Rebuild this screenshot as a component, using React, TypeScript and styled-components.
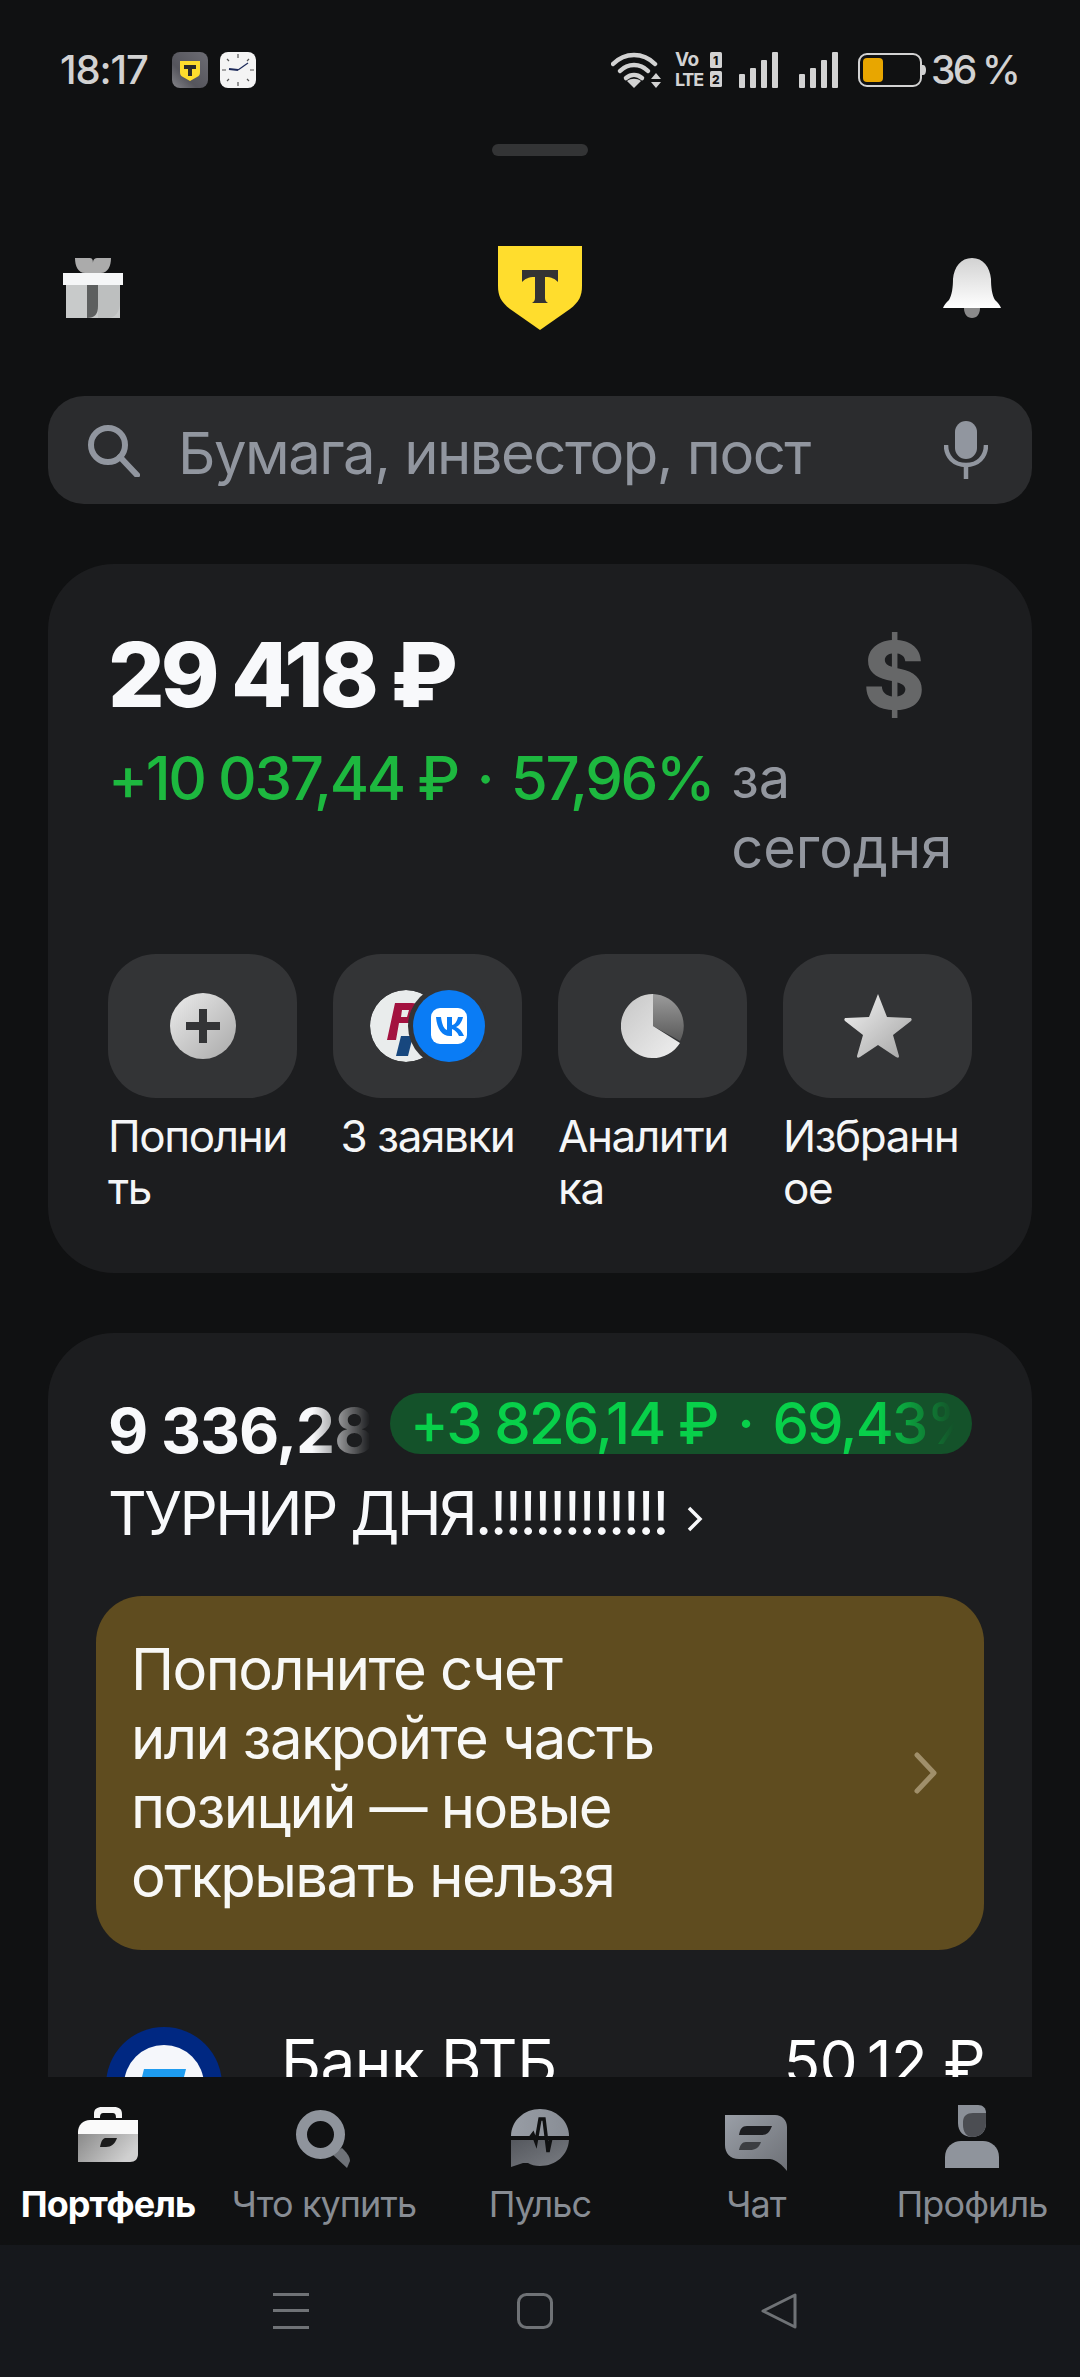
import React from 'react';
import styled, { createGlobalStyle } from 'styled-components';

const GlobalStyle = createGlobalStyle`
  html, body {
    margin: 0;
    padding: 0;
    background: #101112;
  }
  * {
    box-sizing: border-box;
  }
`;

const font = `Inter, "Noto Sans", "Liberation Sans", sans-serif`;

const Screen = styled.div`
  width: 1080px;
  height: 2377px;
  display: flex;
  flex-direction: column;
  overflow: hidden;
  background: #101112;
  font-family: ${font};
  color: #fff;
`;

const Scroll = styled.main`
  flex: 1;
  min-height: 0;
  overflow: hidden;
`;

/* status bar */
const StatusBar = styled.div`
  height: 136px;
  padding: 51px 62px 0 60px;
  display: flex;
  justify-content: space-between;
  align-items: flex-start;
  color: #d2d2d2;
`;

const StatusGroup = styled.div`
  display: flex;
  align-items: center;
  height: 37px;
`;

const Time = styled.span`
  font-size: 40px;
  font-weight: 500;
  letter-spacing: -1.1px;
  margin-right: 24px;
`;

const Percent = styled.span`
  font-size: 39px;
  font-weight: 500;
  margin-left: 5px;
  letter-spacing: -2.8px;
`;

const Handle = styled.div`
  width: 96px;
  height: 12px;
  margin: 8px auto 0;
  border-radius: 6px;
  background: #333435;
`;

const Header = styled.header`
  margin-top: 90px;
  height: 84px;
  padding: 12px 78px 0 63px;
  display: flex;
  justify-content: space-between;
  align-items: flex-start;
  position: relative;
`;

const LogoSlot = styled.div`
  position: absolute;
  left: 497px;
  top: 0;
`;

/* search */
const Search = styled.div`
  margin: 66px 48px 0;
  height: 108px;
  border-radius: 36px;
  background: #2b2c2e;
  display: flex;
  align-items: center;
  padding: 0 44px 0 38px;
`;

const SearchText = styled.span`
  flex: 1;
  margin-left: 38px;
  padding-top: 6px;
  font-size: 58px;
  letter-spacing: -1.5px;
  color: #91969f;
`;

/* cards */
const Card = styled.section<{ $top: number }>`
  margin: ${({ $top }) => $top}px 48px 0;
  padding: 60px 60px 0;
  border-radius: 66px;
  background: #1c1d1f;
`;

const BalanceRow = styled.div`
  display: flex;
  justify-content: space-between;
  align-items: flex-start;
`;

const Balance = styled.div`
  font-size: 89px;
  font-weight: 800;
  line-height: 102px;
  letter-spacing: -4px;
  color: #f8f9fb;
`;

const Currency = styled.div`
  font-size: 94px;
  font-weight: 800;
  line-height: 102px;
  color: #666768;
  margin-right: 47px;
`;

const ChangeRow = styled.div`
  display: flex;
  margin-top: 17px;
  align-items: flex-start;
`;

const Change = styled.div`
  font-size: 60px;
  line-height: 70px;
  font-weight: 500;
  letter-spacing: -2.4px;
  color: #1db83f;
  white-space: nowrap;
  margin-right: 18px;
`;

const Dot = styled.span<{ $gap: number }>`
  margin: 0 ${({ $gap }) => $gap}px;
`;

const ChangeNote = styled.div`
  font-size: 56px;
  line-height: 70px;
  color: #93979f;
`;

const Actions = styled.div`
  display: grid;
  grid-template-columns: repeat(4, 189px);
  column-gap: 36px;
  margin-top: 71px;
  padding-bottom: 59px;
`;

const Action = styled.div`
  display: flex;
  flex-direction: column;
  align-items: center;
`;

const ActionTile = styled.div`
  width: 189px;
  height: 144px;
  border-radius: 48px;
  background: #333436;
  display: flex;
  align-items: center;
  justify-content: center;
`;

const ActionLabel = styled.div`
  margin-top: 12px;
  font-size: 44px;
  line-height: 52px;
  letter-spacing: -1.4px;
  overflow-wrap: anywhere;
  color: #f5f6f7;
  width: 100%;
`;

const ActionLabelShort = styled(ActionLabel)`
  width: auto;
  white-space: nowrap;
`;

const TopLine = styled.div`
  display: flex;
  align-items: center;
  height: 62px;
  margin-top: -1px;
`;

const Amount = styled.div`
  width: 262px;
  margin-top: 14px;
  font-size: 62px;
  font-weight: 700;
  letter-spacing: -1px;
  white-space: nowrap;
  overflow: hidden;
  color: #f8f9fb;
  mask-image: linear-gradient(90deg, #000 78%, transparent 100%);
`;

const GainPill = styled.div`
  margin-left: 20px;
  width: 582px;
  height: 61px;
  border-radius: 31px;
  background: #14522a;
  padding-left: 20px;
  display: flex;
  align-items: center;
  overflow: hidden;
`;

const GainText = styled.div`
  width: 544px;
  overflow: hidden;
  white-space: nowrap;
  font-size: 58px;
  font-weight: 500;
  letter-spacing: -1.9px;
  color: #08d04a;
  mask-image: linear-gradient(90deg, #000 86%, transparent 100%);
`;

const PortfolioName = styled.div`
  margin-top: 23px;
  height: 72px;
  display: flex;
  align-items: center;
  font-size: 60px;
  letter-spacing: -2.5px;
  color: #f8f9fb;
`;

const NameChevron = styled.span`
  display: flex;
  margin-left: 20px;
  margin-top: 12px;
`;

const Notice = styled.div`
  margin: 47px -12px 0;
  min-height: 354px;
  padding: 0 46px 0 35px;
  border-radius: 46px;
  background: #5f4c1f;
  display: flex;
  align-items: center;
  justify-content: space-between;
`;

const NoticeText = styled.div`
  font-size: 58px;
  line-height: 69px;
  letter-spacing: -1.6px;
  color: #f8f8f6;
`;

const Position = styled.div`
  margin: 77px -13px 0 -2px;
  display: flex;
  align-items: flex-start;
`;

const PositionLogo = styled.div`
  width: 116px;
  height: 116px;
  flex-shrink: 0;
`;

const PositionName = styled.div`
  flex: 1;
  margin-left: 59px;
  font-size: 62px;
  line-height: 70px;
  letter-spacing: -0.5px;
`;

const PositionPrice = styled.div`
  font-size: 60px;
  line-height: 70px;
  letter-spacing: -0.5px;
`;

/* tab bar */
const TabBar = styled.nav`
  height: 168px;
  flex-shrink: 0;
  background: #101112;
  display: grid;
  grid-template-columns: repeat(5, 216px);
`;

const Tab = styled.div<{ $active?: boolean }>`
  display: flex;
  flex-direction: column;
  align-items: center;
  justify-content: flex-end;
  padding-bottom: 19px;
  font-size: 36px;
  line-height: 44px;
  letter-spacing: -0.9px;
  white-space: nowrap;
  font-weight: ${({ $active }) => ($active ? 700 : 400)};
  color: ${({ $active }) => ($active ? '#fff' : '#878c93')};
`;

const TabIcon = styled.div<{ $lift: number }>`
  height: 70px;
  margin-bottom: 11px;
  padding-bottom: ${({ $lift }) => $lift}px;
  display: flex;
  align-items: flex-end;
`;

const SystemNav = styled.div`
  height: 132px;
  flex-shrink: 0;
  background: #16181c;
  display: flex;
  justify-content: center;
  align-items: flex-start;
  gap: 208px;
  padding: 48px 10px 0 0;
`;

/* icons */
const WifiIcon = () => (
  <svg width="51" height="37" viewBox="0 0 51 37" fill="none" stroke="#d2d2d2" strokeWidth="4.5" strokeLinecap="round">
    <path d="M2 13C14 1 32 1 44 13" />
    <path d="M9 20C17 12 29 12 37 20" />
    <path d="M15 27C20 23 26 23 31 27" />
    <path d="M23 37l-7-7c4-3 10-3 14 0z" fill="#d2d2d2" stroke="none" />
    <path d="M45 22l5 6H40zM45 37l-5-6h10z" fill="#d2d2d2" stroke="none" />
  </svg>
);

const VolteIcon = () => (
  <svg width="48" height="37" viewBox="0 0 48 37" fill="#d2d2d2" style={{ marginLeft: 13 }}>
    <text x="0" y="15" fontFamily="Inter" fontWeight="700" fontSize="19" letterSpacing="-0.5">Vo</text>
    <text x="0" y="35" fontFamily="Inter" fontWeight="700" fontSize="18" letterSpacing="-1.2">LTE</text>
    <rect x="35" y="1" width="12" height="16" rx="1.5" />
    <text x="38" y="14" fontFamily="Inter" fontWeight="800" fontSize="12" fill="#101112">1</text>
    <rect x="35" y="20" width="12" height="16" rx="1.5" />
    <text x="37" y="33" fontFamily="Inter" fontWeight="800" fontSize="12" fill="#101112">2</text>
  </svg>
);

const SignalIcon = ({ left }: { left: number }) => (
  <svg width="40" height="37" viewBox="0 0 40 37" fill="#d2d2d2" style={{ marginLeft: left }}>
    <rect x="0" y="23" width="6" height="14" rx="1" />
    <rect x="11" y="17" width="6" height="20" rx="1" />
    <rect x="22" y="9" width="6" height="28" rx="1" />
    <rect x="33" y="1" width="6" height="36" rx="1" />
  </svg>
);

const BatteryIcon = () => (
  <svg width="68" height="34" viewBox="0 0 68 34" style={{ marginLeft: 19 }}>
    <rect x="1" y="1" width="62" height="32" rx="8" fill="none" stroke="#d2d2d2" strokeWidth="2" />
    <rect x="5" y="5" width="20" height="24" rx="4" fill="#e8a600" />
    <path d="M64 12h1c2 0 3 2 3 5s-1 5-3 5h-1z" fill="#d2d2d2" />
  </svg>
);

const BankApp = () => (
  <svg width="36" height="36" viewBox="0 0 36 36">
    <defs>
      <linearGradient id="appBg" x1="0" y1="1" x2="1" y2="0">
        <stop offset="0" stopColor="#85858a" />
        <stop offset="0.35" stopColor="#55555c" />
        <stop offset="1" stopColor="#6c6c73" />
      </linearGradient>
    </defs>
    <rect width="36" height="36" rx="8" fill="url(#appBg)" />
    <path d="M8 9h20v11c0 3-1 4-3 5l-7 4-7-4c-2-1-3-2-3-5z" fill="#ffdd2d" />
    <path d="M12 13h12v4h-4v7h-4v-7h-4z" fill="#2b2b2b" />
  </svg>
);

const ClockApp = () => (
  <svg width="36" height="36" viewBox="0 0 36 36" style={{ marginLeft: 12 }}>
    <rect width="36" height="36" rx="8" fill="#f4f4f4" />
    <path d="M18 2v4M18 30v4M2 18h4M30 18h4M7 7l2 2M29 7l-2 2M7 29l2-2M29 29l-2-2" stroke="#555" strokeWidth="1.2" />
    <path d="M18 18l10-7" stroke="#1d2a5a" strokeWidth="1.2" />
    <path d="M18 18l-9-1" stroke="#1d2a5a" strokeWidth="2" />
  </svg>
);

const GiftIcon = () => (
  <svg width="62" height="60" viewBox="0 0 62 60">
    <path d="M12 0h14c3 0 4 1 4 5 0-4 2-5 5-5h13c0 8-3 15-10 15H22C15 15 12 8 12 0z" fill="#ababab" />
    <rect x="3" y="27" width="54" height="33" fill="#c8caca" />
    <path d="M35 27h22v18c0 9-5 15-13 15h-9z" fill="#bdbfbf" />
    <path d="M24 27h11v21c0 8-3 12-11 12z" fill="#5d5f5f" />
    <rect x="0" y="15" width="60" height="12" fill="#f5f6f7" />
  </svg>
);

const LogoIcon = () => (
  <svg width="86" height="84" viewBox="0 0 86 84">
    <path d="M1 0H85V40C85 50 82 56 73 63L43 84 13 63C4 56 1 50 1 40Z" fill="#ffdd2d" />
    <path d="M25 24H61V36C58 33 55 31 48 31V52C48 54 49 56 51 57H35C37 56 38 54 38 52V31C31 31 28 33 25 36Z" fill="#333333" />
  </svg>
);

const BellIcon = () => (
  <svg width="60" height="60" viewBox="0 0 60 60">
    <defs>
      <linearGradient id="bellFill" x1="0" y1="0" x2="0" y2="1">
        <stop offset="0" stopColor="#d2d2d2" />
        <stop offset="1" stopColor="#fff" />
      </linearGradient>
    </defs>
    <path d="M22 50h16c0 6-3 10-8 10s-8-4-8-10z" fill="#8a8a8a" />
    <path d="M30 0c11 0 18 9 19 21 0 8 1 16 4 21 3 3 5 5 6 8H1c1-3 3-5 6-8 3-5 4-13 4-21C12 9 19 0 30 0z" fill="url(#bellFill)" />
  </svg>
);

const SearchIcon = () => (
  <svg width="54" height="54" viewBox="0 0 54 54" fill="none" stroke="#91969f" strokeWidth="6">
    <circle cx="22" cy="22" r="17" />
    <path d="M34 34l17 18" strokeLinecap="round" />
  </svg>
);

const MicIcon = () => (
  <svg width="44" height="58" viewBox="0 0 44 58" fill="none" stroke="#91969f" strokeWidth="4.5">
    <rect x="11" y="0" width="22" height="38" rx="11" fill="#91969f" stroke="none" />
    <path d="M2 24c0 12 8 20 20 20s20-8 20-20" />
    <path d="M22 44v14" />
  </svg>
);

const PlusIcon = () => (
  <svg width="66" height="66" viewBox="0 0 66 66">
    <defs>
      <linearGradient id="plusFill" x1="0" y1="0" x2="1" y2="1">
        <stop offset="0" stopColor="#ececec" />
        <stop offset="1" stopColor="#a9a9a9" />
      </linearGradient>
    </defs>
    <circle cx="33" cy="33" r="33" fill="url(#plusFill)" />
    <path d="M29 16h8v13h13v8H37v13h-8V37H16v-8h13z" fill="#333436" />
  </svg>
);

const OrdersIcon = () => (
  <svg width="116" height="72" viewBox="0 0 116 72">
    <defs>
      <clipPath id="psbClip">
        <circle cx="36" cy="36" r="36" />
      </clipPath>
    </defs>
    <g clipPath="url(#psbClip)">
      <circle cx="36" cy="36" r="36" fill="#e9ecec" />
      <path d="M17 50l8-37h17c7 0 9 4 8 10-1 7-6 10-12 10h-9l-3 17z" fill="#a3123f" />
      <path d="M32 20h7l-2 7h-6z" fill="#e9ecec" />
      <path d="M26 66l5-20h12l-5 20z" fill="#17477e" />
    </g>
    <circle cx="79" cy="36" r="41" fill="#333436" />
    <circle cx="79" cy="36" r="36" fill="#0a7cf5" />
    <rect x="61" y="18" width="36" height="36" rx="9" fill="#fff" />
    <path d="M66 27h5c1 8 3 12 6 13V27h5v8c3 0 5-4 6-8h5c-1 5-4 9-7 10 3 1 6 4 8 9h-5c-2-4-4-6-7-7v7h-2c-8 0-13-7-14-19z" fill="#0a7cf5" />
  </svg>
);

const PieIcon = () => (
  <svg width="64" height="64" viewBox="0 0 64 64">
    <defs>
      <linearGradient id="pieA" x1="0" y1="0" x2="1" y2="1">
        <stop offset="0" stopColor="#c6c6c6" />
        <stop offset="1" stopColor="#efefef" />
      </linearGradient>
      <linearGradient id="pieB" x1="0" y1="0" x2="0" y2="1">
        <stop offset="0" stopColor="#9b9b9b" />
        <stop offset="1" stopColor="#5a5a5a" />
      </linearGradient>
    </defs>
    <path d="M32 32L32 0a32 32 0 0 1 27 47z" fill="url(#pieB)" />
    <path d="M32 0v32l27 17A32 32 0 1 1 32 0z" fill="url(#pieA)" />
  </svg>
);

const StarIcon = () => (
  <svg width="68" height="64" viewBox="0 0 68 64">
    <defs>
      <linearGradient id="starFill" x1="0" y1="0" x2="1" y2="1">
        <stop offset="0" stopColor="#f4f4f4" />
        <stop offset="1" stopColor="#a3a3a3" />
      </linearGradient>
    </defs>
    <path d="M34 0l9 23 23 1c2 0 2 2 1 3L49 41l6 21c0 2-1 2-3 1L34 51 16 63c-2 1-3 1-3-1l6-21L1 27c-1-1-1-3 1-3l23-1z" fill="url(#starFill)" />
  </svg>
);

const SmallChevron = () => (
  <svg width="16" height="28" viewBox="0 0 16 28" fill="none" stroke="#f8f9fb" strokeWidth="3.5">
    <path d="M2 3l11 11L2 25" />
  </svg>
);

const NoticeChevron = () => (
  <svg width="24" height="42" viewBox="0 0 24 42" fill="none" stroke="#a08f6a" strokeWidth="5" strokeLinecap="round" strokeLinejoin="round">
    <path d="M3 3l17 18L3 39" />
  </svg>
);

const VtbLogo = () => (
  <svg width="116" height="116" viewBox="0 0 116 116">
    <circle cx="58" cy="58" r="58" fill="#002882" />
    <circle cx="58" cy="58" r="40" fill="#f5f7fb" />
    <path d="M38 42h42l-3 12H35z" fill="#1e9cf0" />
  </svg>
);

const BriefcaseIcon = () => (
  <svg width="60" height="56" viewBox="0 0 60 56">
    <defs>
      <linearGradient id="caseFill" x1="0" y1="0" x2="1" y2="0.4">
        <stop offset="0" stopColor="#8a8a8a" />
        <stop offset="1" stopColor="#d0d0d0" />
      </linearGradient>
    </defs>
    <path d="M16 11V7C16 2 19 0 24 0H36C41 0 44 2 44 7V11H38C38 7 37 6 34 6H26C23 6 22 7 22 11Z" fill="#f5f5f5" />
    <path d="M0 27H60V47C60 52 57 55 52 55H0Z" fill="url(#caseFill)" />
    <path d="M12 13H60V27H0V25C0 18 5 13 12 13Z" fill="#fafafa" />
    <path d="M27 31H39C37 37 33 40 28 40H22C23 35 24 32 27 31Z" fill="#1c1c1c" />
  </svg>
);

const BuyIcon = () => (
  <svg width="56" height="60" viewBox="0 0 56 60">
    <path d="M36 45L46 39C50 43 54 47 54 52L51 59Z" fill="#6e7278" />
    <circle cx="24.5" cy="25.5" r="19" fill="none" stroke="#8f949c" strokeWidth="11" />
  </svg>
);

const PulseIcon = () => (
  <svg width="58" height="58" viewBox="0 0 58 58">
    <defs>
      <linearGradient id="pulseTop" x1="0" y1="0" x2="1" y2="0">
        <stop offset="0" stopColor="#989da5" />
        <stop offset="1" stopColor="#888d95" />
      </linearGradient>
      <linearGradient id="pulseLow" x1="0" y1="0" x2="1" y2="1">
        <stop offset="0" stopColor="#55585e" />
        <stop offset="1" stopColor="#7a7d83" />
      </linearGradient>
    </defs>
    <path d="M29 0C45 0 58 12 58 27H0C0 12 13 0 29 0Z" fill="url(#pulseTop)" />
    <path d="M0 31H58C57 46 45 57 29 57C24 57 20 56 17 54L12 54 0 58Z" fill="url(#pulseLow)" />
    <path d="M0 29H19L22 25 25 33 29 10H33L37 43 40 29H58" fill="none" stroke="#101112" strokeWidth="3.5" />
  </svg>
);

const ChatIcon = () => (
  <svg width="62" height="56" viewBox="0 0 62 56">
    <defs>
      <linearGradient id="chatFill" x1="0" y1="0" x2="1" y2="1">
        <stop offset="0" stopColor="#9a9fa7" />
        <stop offset="1" stopColor="#6d7076" />
      </linearGradient>
    </defs>
    <path d="M0 0H50C57 0 62 5 62 12V56C57 50 52 45 45 44H14C5 44 0 38 0 30Z" fill="url(#chatFill)" />
    <path d="M22 11H47C44 18 42 20 36 20H14C15 14 17 11 22 11Z" fill="#1d1e21" />
    <path d="M21 27H36C34 33 30 35 25 35H14C15 30 17 27 21 27Z" fill="#3c3e42" />
  </svg>
);

const ProfileIcon = () => (
  <svg width="54" height="63" viewBox="0 0 54 63">
    <path d="M13 0H33C38 0 41 3 41 8V18C41 27 35 32 27 32C19 32 13 27 13 18Z" fill="#8b9098" />
    <path d="M41 8V18C41 27 35 32 27 32C21 32 18 26 18 20V17C18 11 22 8 28 8Z" fill="#4b4d52" />
    <path d="M0 63V52C0 42 8 36 16 36H38C46 36 54 42 54 52V63Z" fill="#8f949c" />
  </svg>
);

const MenuIcon = () => (
  <svg width="36" height="36" viewBox="0 0 36 36" fill="#6f7276">
    <rect y="0" width="36" height="3" />
    <rect y="16" width="36" height="3" />
    <rect y="33" width="36" height="3" />
  </svg>
);

const HomeIcon = () => (
  <svg width="36" height="36" viewBox="0 0 36 36" fill="none" stroke="#6f7276" strokeWidth="3">
    <rect x="1.5" y="1.5" width="33" height="33" rx="8" />
  </svg>
);

const BackIcon = () => (
  <svg width="36" height="36" viewBox="0 0 36 36" fill="none" stroke="#6f7276" strokeWidth="3" strokeLinejoin="round">
    <path d="M34 2v32L2 18z" />
  </svg>
);

const tabs = [
  { label: 'Портфель', icon: <BriefcaseIcon />, lift: 8, active: true },
  { label: 'Что купить', icon: <BuyIcon />, lift: 2 },
  { label: 'Пульс', icon: <PulseIcon />, lift: 4 },
  { label: 'Чат', icon: <ChatIcon />, lift: 0 },
  { label: 'Профиль', icon: <ProfileIcon />, lift: 3 },
];

const App: React.FC = () => (
  <>
    <GlobalStyle />
    <Screen>
      <Scroll>
        <StatusBar>
          <StatusGroup>
            <Time>18:17</Time>
            <BankApp />
            <ClockApp />
          </StatusGroup>
          <StatusGroup>
            <WifiIcon />
            <VolteIcon />
            <SignalIcon left={16} />
            <SignalIcon left={20} />
            <BatteryIcon />
            <Percent>36 %</Percent>
          </StatusGroup>
        </StatusBar>
        <Handle />

        <Header>
          <GiftIcon />
          <LogoSlot>
            <LogoIcon />
          </LogoSlot>
          <BellIcon />
        </Header>

        <Search>
          <SearchIcon />
          <SearchText>Бумага, инвестор, пост</SearchText>
          <MicIcon />
        </Search>

        <Card $top={60}>
          <BalanceRow>
            <Balance>29 418 ₽</Balance>
            <Currency>$</Currency>
          </BalanceRow>
          <ChangeRow>
            <Change>+10 037,44 ₽<Dot $gap={5}> · </Dot>57,96%</Change>
            <ChangeNote>за сегодня</ChangeNote>
          </ChangeRow>
          <Actions>
            <Action>
              <ActionTile><PlusIcon /></ActionTile>
              <ActionLabel>Пополнить</ActionLabel>
            </Action>
            <Action>
              <ActionTile><OrdersIcon /></ActionTile>
              <ActionLabelShort>3 заявки</ActionLabelShort>
            </Action>
            <Action>
              <ActionTile><PieIcon /></ActionTile>
              <ActionLabel>Аналитика</ActionLabel>
            </Action>
            <Action>
              <ActionTile><StarIcon /></ActionTile>
              <ActionLabel>Избранное</ActionLabel>
            </Action>
          </Actions>
        </Card>

        <Card $top={60}>
          <TopLine>
            <Amount>9 336,28 ₽</Amount>
            <GainPill>
              <GainText>+3 826,14 ₽<Dot $gap={6}> · </Dot>69,43%</GainText>
            </GainPill>
          </TopLine>
          <PortfolioName>
            ТУРНИР ДНЯ.!!!!!!!!!!!!
            <NameChevron><SmallChevron /></NameChevron>
          </PortfolioName>
          <Notice>
            <NoticeText>
              Пополните счет
              <br />
              или закройте часть
              <br />
              позиций — новые
              <br />
              открывать нельзя
            </NoticeText>
            <NoticeChevron />
          </Notice>
          <Position>
            <PositionLogo><VtbLogo /></PositionLogo>
            <PositionName>Банк ВТБ</PositionName>
            <PositionPrice>50,12 ₽</PositionPrice>
          </Position>
        </Card>
      </Scroll>

      <TabBar>
        {tabs.map((tab) => (
          <Tab key={tab.label} $active={tab.active}>
            <TabIcon $lift={tab.lift}>{tab.icon}</TabIcon>
            {tab.label}
          </Tab>
        ))}
      </TabBar>

      <SystemNav>
        <MenuIcon />
        <HomeIcon />
        <BackIcon />
      </SystemNav>
    </Screen>
  </>
);

export default App;
